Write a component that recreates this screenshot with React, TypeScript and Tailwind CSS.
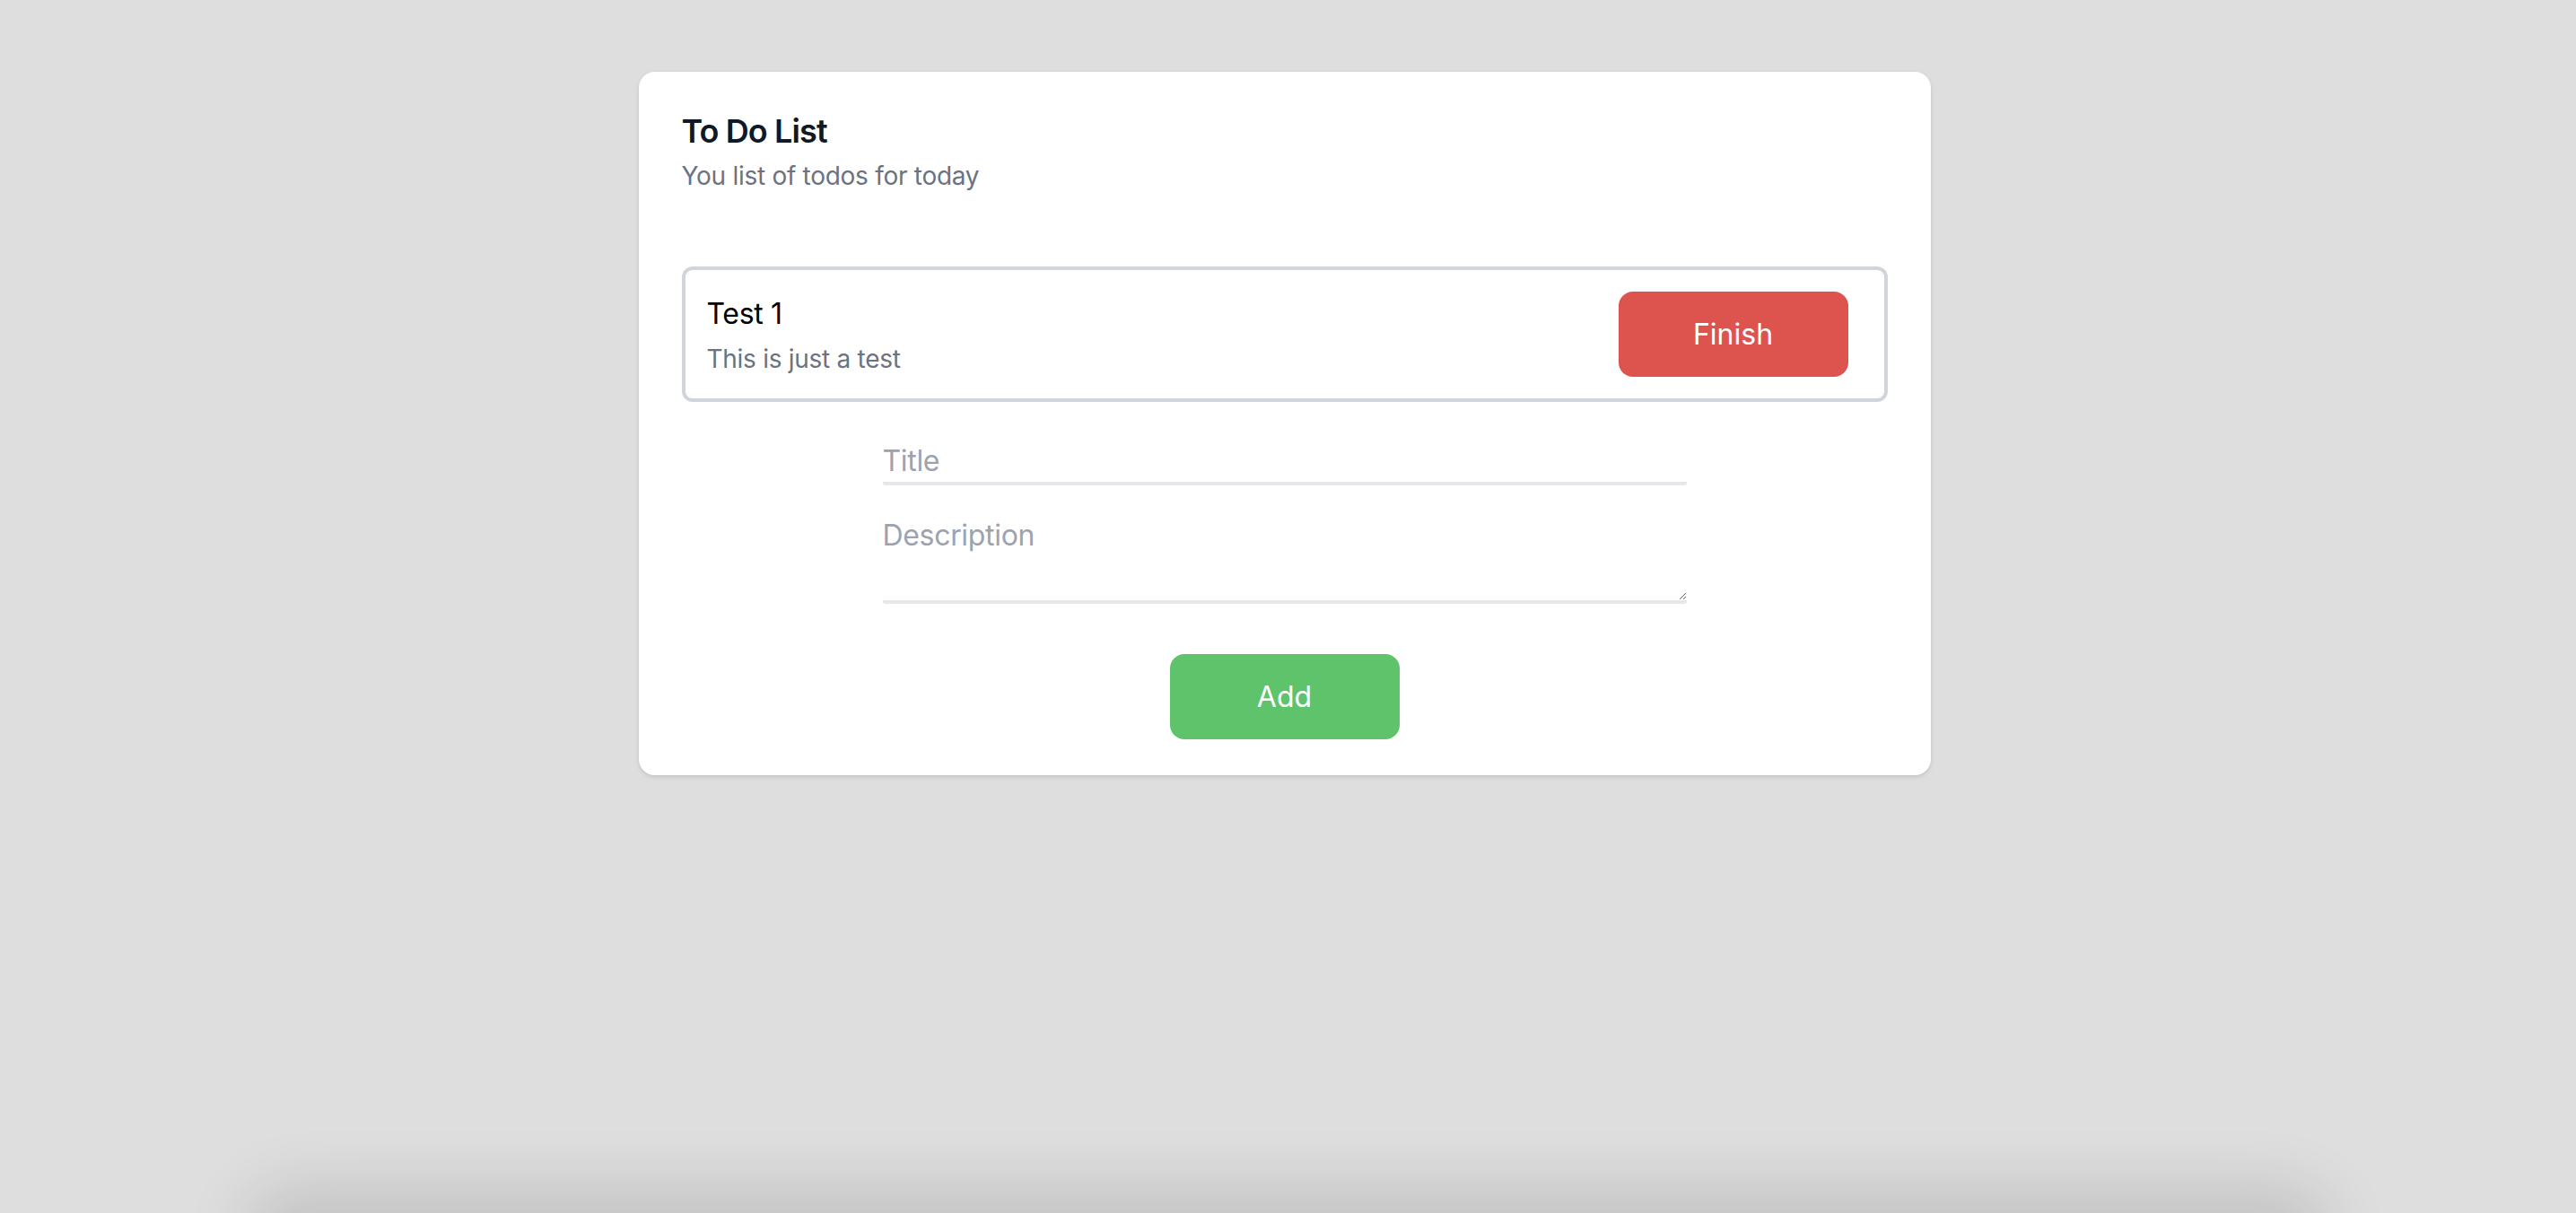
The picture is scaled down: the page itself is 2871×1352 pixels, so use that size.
import { useState } from "react";

type Todo = {
  title: string;
  description: string;
};

function TodoItem({ todo, onFinish }: { todo: Todo; onFinish: () => void }) {
  return (
    <li className="flex items-center justify-between rounded-[12px] border-[4px] border-[#d1d5db] py-[24px] pl-[24px] pr-[40px]">
      <div className="flex flex-col gap-[6px]">
        <p className="text-[32px] leading-[48px] tracking-[-0.01em] text-black">{todo.title}</p>
        <p className="text-[28px] leading-[40px] tracking-[-0.01em] text-[#6b7280]">{todo.description}</p>
      </div>
      <button
        onClick={onFinish}
        className="h-[95px] w-[256px] rounded-[16px] bg-[#dd534e] text-[32px] text-white"
      >
        Finish
      </button>
    </li>
  );
}

export default function App() {
  const [todos, setTodos] = useState<Todo[]>([
    { title: "Test 1", description: "This is just a test" },
  ]);
  const [title, setTitle] = useState("");
  const [description, setDescription] = useState("");

  const addTodo = () => {
    if (!title) return;
    setTodos([...todos, { title, description }]);
    setTitle("");
    setDescription("");
  };

  return (
    <div className="relative min-h-screen overflow-hidden bg-[#dedede] pt-[80px] pr-2 font-['Inter',sans-serif]">
      <div className="mx-auto w-[1440px] rounded-[18px] bg-white px-[48px] pt-[48px] pb-[40px] shadow-[0_2px_5px_rgba(0,0,0,0.12)]">
        <div className="flex flex-col gap-[12px]">
          <h1 className="text-[36px] font-semibold leading-[36px] tracking-tight text-[#111827]">To Do List</h1>
          <p className="text-[28px] leading-[40px] tracking-[-0.01em] text-[#6b7280]">You list of todos for today</p>
        </div>

        <ul className="mt-[81px] flex flex-col gap-[24px]">
          {todos.map((todo, i) => (
            <TodoItem
              key={i}
              todo={todo}
              onFinish={() => setTodos(todos.filter((_, j) => j !== i))}
            />
          ))}
        </ul>

        <div className="mx-auto mt-[42px] flex w-[896px] flex-col">
          <input
            value={title}
            onChange={(e) => setTitle(e.target.value)}
            placeholder="Title"
            className="h-[51px] w-full rounded-[3px] border-b-[4px] border-[#e5e7eb] text-[32px] tracking-[-0.01em] text-black outline-none placeholder:text-[#9ca3af]"
          />
          <textarea
            value={description}
            onChange={(e) => setDescription(e.target.value)}
            placeholder="Description"
            rows={2}
            className="mt-[32px] block h-[100px] w-full rounded-[3px] border-b-[4px] border-[#e5e7eb] text-[32px] leading-[48px] tracking-[-0.01em] text-black outline-none placeholder:text-[#9ca3af]"
          />
          <button
            onClick={addTodo}
            className="mx-auto mt-[56px] h-[95px] w-[256px] rounded-[16px] bg-[#5fc36b] text-[32px] text-white"
          >
            Add
          </button>
        </div>
      </div>

      {/* soft shadow cast from below the window edge */}
      <div className="pointer-events-none absolute bottom-[-60px] left-[300px] right-[300px] h-[60px] rounded-[40px] shadow-[0_0_70px_30px_rgba(0,0,0,0.12)]" />
    </div>
  );
}
